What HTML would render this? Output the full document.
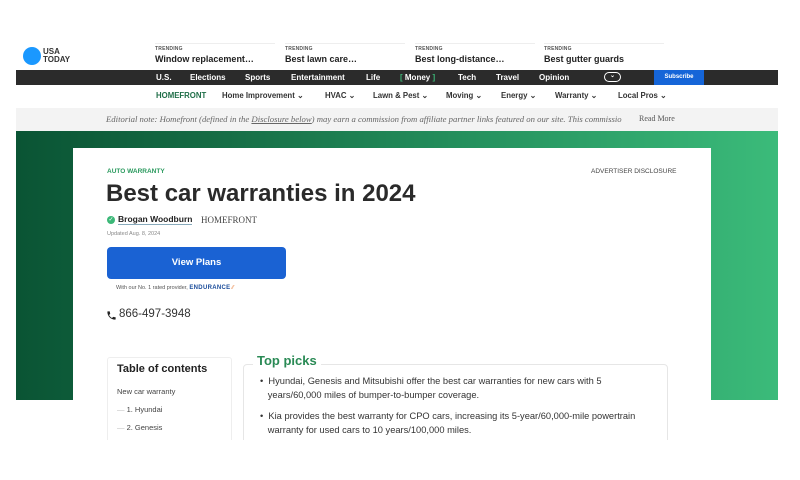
<!DOCTYPE html>
<html><head><meta charset="utf-8"><style>
*{margin:0;padding:0;box-sizing:border-box}
body{width:800px;height:480px;background:#fff;position:relative;overflow:hidden;font-family:"Liberation Sans",sans-serif;color:#222}
.a{position:absolute;white-space:nowrap}
.tr{position:absolute;top:43px;width:120px;border-top:1px solid #eee;padding-top:2px}
.tr small{display:block;font-size:5px;font-weight:bold;color:#555;letter-spacing:.2px}
.tr b{display:block;font-size:9px;color:#222;margin-top:2px}
.nav{position:absolute;left:16px;top:70px;width:762px;height:15px;background:#2b2b2b}
.nav span{position:absolute;top:3px;font-size:8px;font-weight:bold;color:#fff}
.sub{position:absolute;left:154px;top:91px;font-size:7.8px;font-weight:bold;color:#333}
.sub span{position:absolute;white-space:nowrap}
</style></head><body>
<div class="a" style="left:23px;top:47px;width:18px;height:18px;border-radius:50%;background:#1a98ff"></div>
<div class="a" style="left:43px;top:48px;font-size:8px;font-weight:bold;line-height:8px;color:#333">USA<br>TODAY</div>
<div class="tr" style="left:155px"><small>TRENDING</small><b>Window replacement…</b></div>
<div class="tr" style="left:285px"><small>TRENDING</small><b>Best lawn care…</b></div>
<div class="tr" style="left:415px"><small>TRENDING</small><b>Best long-distance…</b></div>
<div class="tr" style="left:544px"><small>TRENDING</small><b>Best gutter guards</b></div>
<div class="nav">
<span style="left:140px">U.S.</span><span style="left:174px">Elections</span><span style="left:229px">Sports</span><span style="left:275px">Entertainment</span><span style="left:350px">Life</span>
<span style="left:384px"><i style="color:#3cb878;font-style:normal">[</i> Money <i style="color:#3cb878;font-style:normal">]</i></span><span style="left:442px">Tech</span><span style="left:480px">Travel</span><span style="left:523px">Opinion</span>
<span style="left:588px;top:2px;width:17px;height:10px;border:1px solid #fff;border-radius:6px;font-size:6px;text-align:center;line-height:7px">⌄</span>
<span style="left:638px;top:0;width:50px;height:15px;background:#1565d8;font-size:6px;text-align:center;line-height:15px">Subscribe</span>
</div>
<div class="sub"><span style="left:2px;color:#1f6e48">HOMEFRONT</span><span style="left:68px">Home Improvement ⌄</span><span style="left:171px">HVAC ⌄</span><span style="left:219px">Lawn &amp; Pest ⌄</span><span style="left:292px">Moving ⌄</span><span style="left:347px">Energy ⌄</span><span style="left:401px">Warranty ⌄</span><span style="left:464px">Local Pros ⌄</span></div>
<div class="a" style="left:16px;top:108px;width:762px;height:23px;background:#f3f3f3"></div>
<div class="a" style="left:106px;top:114px;font-family:'Liberation Serif',serif;font-style:italic;font-size:8.7px;color:#666">Editorial note: Homefront (defined in the <u>Disclosure below</u>) may earn a commission from affiliate partner links featured on our site. This commissio</div>
<div class="a" style="left:620px;top:108px;width:158px;height:23px;background:linear-gradient(90deg,rgba(243,243,243,0),#f3f3f3 12px)"></div>
<div class="a" style="left:639px;top:114px;font-family:'Liberation Serif',serif;font-size:8px;color:#555">Read More</div>
<div class="a" style="left:16px;top:131px;width:762px;height:269px;background:linear-gradient(90deg,#0a5434 0%,#156b44 25%,#25915e 60%,#3bbb7a 100%)"></div>
<div class="a" style="left:73px;top:148px;width:638px;height:292px;background:#fff"></div>
<div class="a" style="left:107px;top:168px;font-size:6.5px;font-weight:bold;color:#2a9a5e">AUTO WARRANTY</div>
<div class="a" style="left:591px;top:168px;font-size:6.5px;color:#444">ADVERTISER DISCLOSURE</div>
<div class="a" style="left:106px;top:180px;font-size:24px;font-weight:bold;color:#2a2a2a">Best car warranties in 2024</div>
<div class="a" style="left:107px;top:216px;width:8px;height:8px;border-radius:50%;background:#3cb878;color:#fff;font-size:6px;text-align:center;line-height:8px">✓</div>
<div class="a" style="left:118px;top:214px;font-size:8.5px;font-weight:bold;color:#222;border-bottom:1px solid #8ab">Brogan Woodburn</div>
<div class="a" style="left:201px;top:215px;font-family:'Liberation Serif',serif;font-size:9px;color:#444">HOMEFRONT</div>
<div class="a" style="left:107px;top:231px;font-size:5.5px;color:#888">Updated Aug. 8, 2024</div>
<div class="a" style="left:107px;top:247px;width:179px;height:32px;background:#1a62d3;border-radius:4px;color:#fff;font-size:9.5px;font-weight:bold;text-align:center;line-height:31px">View Plans</div>
<div class="a" style="left:116px;top:285px;font-size:5.5px;color:#555">With our No. 1 rated provider, <b style="color:#1a4c9a;font-size:6px;letter-spacing:.3px">ENDURANCE</b> <span style="color:#e8884a">⁄⁄</span></div>
<svg class="a" style="left:106px;top:310px" width="11" height="11" viewBox="0 0 24 24"><path fill="#222" d="M6.6 10.8c1.4 2.8 3.8 5.1 6.6 6.6l2.2-2.2c.3-.3.7-.4 1-.2 1.1.4 2.3.6 3.6.6.6 0 1 .4 1 1V20c0 .6-.4 1-1 1C10.6 21 3 13.4 3 4c0-.6.4-1 1-1h3.5c.6 0 1 .4 1 1 0 1.3.2 2.5.6 3.6.1.3 0 .7-.2 1z"/></svg>
<div class="a" style="left:119px;top:308px;font-size:11.5px;color:#333">866-497-3948</div>
<div class="a" style="left:107px;top:357px;width:125px;height:90px;border:1px solid #eee;border-radius:3px"></div>
<div class="a" style="left:117px;top:363px;font-size:11px;font-weight:bold;color:#222">Table of contents</div>
<div class="a" style="left:117px;top:387px;font-size:7.5px;color:#444">New car warranty</div>
<div class="a" style="left:117px;top:405px;font-size:7.5px;color:#444"><span style="color:#bbb">—</span> 1. Hyundai</div>
<div class="a" style="left:117px;top:423px;font-size:7.5px;color:#444"><span style="color:#bbb">—</span> 2. Genesis</div>
<div class="a" style="left:243px;top:364px;width:425px;height:90px;border:1px solid #e6e6e6;border-radius:4px"></div>
<div class="a" style="left:253px;top:353px;padding:0 4px;background:#fff;font-size:13px;font-weight:bold;color:#2a8a55">Top picks</div>
<div class="a" style="left:260px;top:374px;font-size:9.3px;line-height:14px;color:#333">• &nbsp;Hyundai, Genesis and Mitsubishi offer the best car warranties for new cars with 5<br>&nbsp;&nbsp;&nbsp;years/60,000 miles of bumper-to-bumper coverage.</div>
<div class="a" style="left:260px;top:409px;font-size:9.3px;line-height:14px;color:#333">• &nbsp;Kia provides the best warranty for CPO cars, increasing its 5-year/60,000-mile powertrain<br>&nbsp;&nbsp;&nbsp;warranty for used cars to 10 years/100,000 miles.</div>
<div class="a" style="left:0;top:440px;width:800px;height:40px;background:#fff"></div>
</body></html>
